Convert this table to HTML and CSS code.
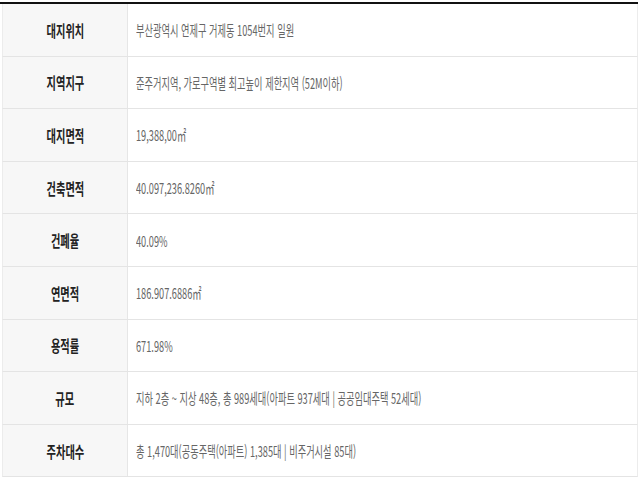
FILE: index.html
```html
<!DOCTYPE html>
<html lang="ko">
<head>
<meta charset="utf-8">
<link rel="stylesheet" href="styles.css">
</head>
<body>
<div class="info">
  <div class="row"><div class="label"><span>대지위치</span></div><div class="value"><span>부산광역시 연제구 거제동 1054번지 일원</span></div></div>
  <div class="row"><div class="label"><span>지역지구</span></div><div class="value"><span>준주거지역, 가로구역별 최고높이 제한지역 (52M이하)</span></div></div>
  <div class="row"><div class="label"><span>대지면적</span></div><div class="value"><span>19,388,00㎡</span></div></div>
  <div class="row"><div class="label"><span>건축면적</span></div><div class="value"><span>40.097,236.8260㎡</span></div></div>
  <div class="row"><div class="label"><span>건폐율</span></div><div class="value"><span>40.09%</span></div></div>
  <div class="row"><div class="label"><span>연면적</span></div><div class="value"><span>186.907.6886㎡</span></div></div>
  <div class="row"><div class="label"><span>용적률</span></div><div class="value"><span>671.98%</span></div></div>
  <div class="row"><div class="label"><span>규모</span></div><div class="value"><span>지하 2층 ~ 지상 48층, 총 989세대(아파트 937세대 | 공공임대주택 52세대)</span></div></div>
  <div class="row"><div class="label"><span>주차대수</span></div><div class="value"><span>총 1,470대(공동주택(아파트) 1,385대 | 비주거시설 85대)</span></div></div>
</div>
</body>
</html>
```

FILE: styles.css
```css
html, body {
  margin: 0;
  padding: 0;
  background: #ffffff;
}
body {
  font-family: "Noto Sans CJK KR", "Noto Sans", sans-serif;
}
.info {
  margin-top: 2px;
  width: 638px;
  border-top: 2px solid #111111;
  box-sizing: border-box;
}
.row {
  display: grid;
  grid-template-columns: 125px 1fr;
  height: 52.6px;
  box-sizing: border-box;
  border-bottom: 1px solid #e4e4e4;
  border-left: 1px solid #ececec;
  border-right: 1px solid #ececec;
  margin-left: 2px;
}
.label {
  background: #f7f7f7;
  border-right: 1px solid #e6e6e6;
  display: flex;
  align-items: center;
  justify-content: center;
  overflow: hidden;
}
.label span {
  display: inline-block;
  font-size: 16px;
  font-weight: 700;
  color: #222222;
  transform: scaleX(0.64);
  white-space: nowrap;
}
.value {
  display: flex;
  align-items: center;
  padding-left: 8px;
  overflow: hidden;
}
.value span {
  display: inline-block;
  font-size: 15px;
  color: #666666;
  transform: scaleX(0.615);
  transform-origin: left center;
  white-space: nowrap;
}
```
